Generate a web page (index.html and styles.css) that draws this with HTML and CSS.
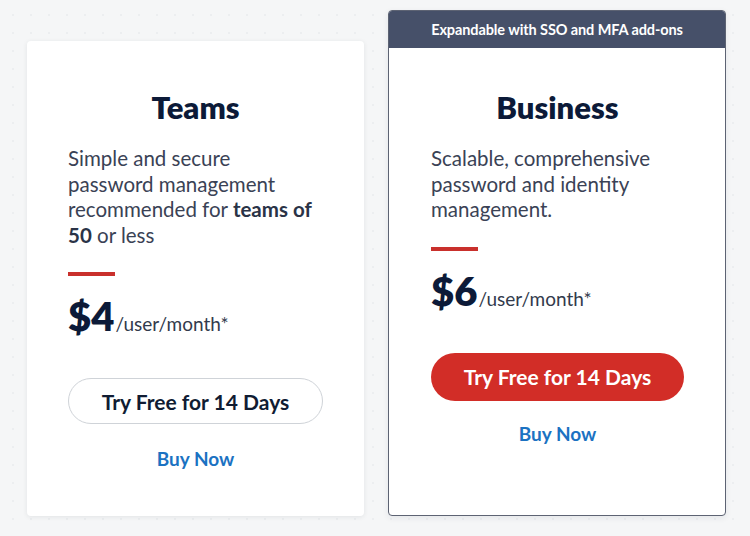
FILE: index.html
```html
<!DOCTYPE html>
<html lang="en">
<head>
<meta charset="utf-8">
<title>Plans</title>
<link rel="stylesheet" href="styles.css">
</head>
<body>
<main class="plans">
  <section class="card card-teams">
    <h2 class="plan-title">Teams</h2>
    <p class="plan-desc">Simple and secure<br>password management<br>recommended for <strong>teams of</strong><br><strong>50</strong> or less</p>
    <div class="rule"></div>
    <div class="price"><span class="amount">$4</span><span class="unit">/user/month*</span></div>
    <a class="btn btn-outline" href="#">Try Free for 14 Days</a>
    <a class="buy" href="#">Buy Now</a>
  </section>
  <section class="card card-business">
    <div class="banner">Expandable with SSO and MFA add-ons</div>
    <div class="card-body">
      <h2 class="plan-title">Business</h2>
      <p class="plan-desc">Scalable, comprehensive<br>password and identity<br>management.</p>
      <div class="rule"></div>
      <div class="price"><span class="amount">$6</span><span class="unit">/user/month*</span></div>
      <a class="btn btn-red" href="#">Try Free for 14 Days</a>
      <a class="buy buy-business" href="#">Buy Now</a>
    </div>
  </section>
</main>
</body>
</html>
```
FILE: styles.css
```css
html, body {
  margin: 0;
  padding: 0;
}
body {
  width: 750px;
  height: 536px;
  overflow: hidden;
  background-color: #f5f6f7;
  background-image: radial-gradient(circle, #eceef0 1px, transparent 1.5px);
  background-size: 18px 18px;
  background-position: 4px 6px;
  font-family: Lato, "Open Sans", "Liberation Sans", sans-serif;
}
.plans {
  display: flex;
  gap: 24px;
  padding: 10px 0 0 27px;
  height: 516px;
  box-sizing: border-box;
  align-items: stretch;
}
.card {
  width: 337px;
  box-sizing: border-box;
  background: #ffffff;
  border-radius: 4px;
  display: flex;
  flex-direction: column;
}
.card-teams {
  margin-top: 31px;
  padding: 48px 41px 0 41px;
  box-shadow: 0 1px 5px rgba(30, 40, 60, 0.09);
}
.card-business {
  width: 338px;
  border: 1px solid #5d6373;
  overflow: hidden;
  box-shadow: 0 2px 6px rgba(30, 40, 60, 0.08);
}
.banner {
  height: 37px;
  background: #465069;
  color: #ffffff;
  font-weight: 700;
  font-size: 14.5px;
  letter-spacing: -0.1px;
  display: flex;
  align-items: center;
  justify-content: center;
}
.card-body {
  padding: 41px 41px 0 42px;
  display: flex;
  flex-direction: column;
}
.plan-title {
  margin: 0;
  text-align: center;
  font-size: 31px;
  line-height: 36px;
  font-weight: 800;
  color: #0c1a38;
}
.plan-desc {
  margin: 21px 0 0 0;
  font-size: 20.5px;
  line-height: 25.5px;
  color: #3a4255;
  white-space: nowrap;
}
.plan-desc strong {
  color: #2a3347;
  font-weight: 700;
}
.rule {
  margin-top: 24px;
  width: 47px;
  height: 4px;
  background: #c9302c;
}
.price {
  margin-top: 20px;
  line-height: 40px;
  height: 40px;
  color: #0c1a38;
  white-space: nowrap;
}
.amount {
  font-size: 40px;
  font-weight: 800;
}
.unit {
  font-size: 19px;
  color: #323a4c;
  margin-left: 1px;
}
.btn {
  margin-top: 42px;
  display: flex;
  align-items: center;
  justify-content: center;
  border-radius: 24px;
  font-size: 21px;
  font-weight: 700;
  text-decoration: none;
  box-sizing: border-box;
}
.btn-outline {
  height: 46px;
  border: 1px solid #cfd3d8;
  color: #101c33;
  background: #ffffff;
}
.btn-red {
  height: 48px;
  background: #d22d27;
  color: #ffffff;
}
.buy {
  margin-top: 23px;
  text-align: center;
  font-size: 19px;
  line-height: 24px;
  font-weight: 700;
  color: #1b72c2;
  text-decoration: none;
}
.buy-business {
  margin-top: 21px;
}
```
